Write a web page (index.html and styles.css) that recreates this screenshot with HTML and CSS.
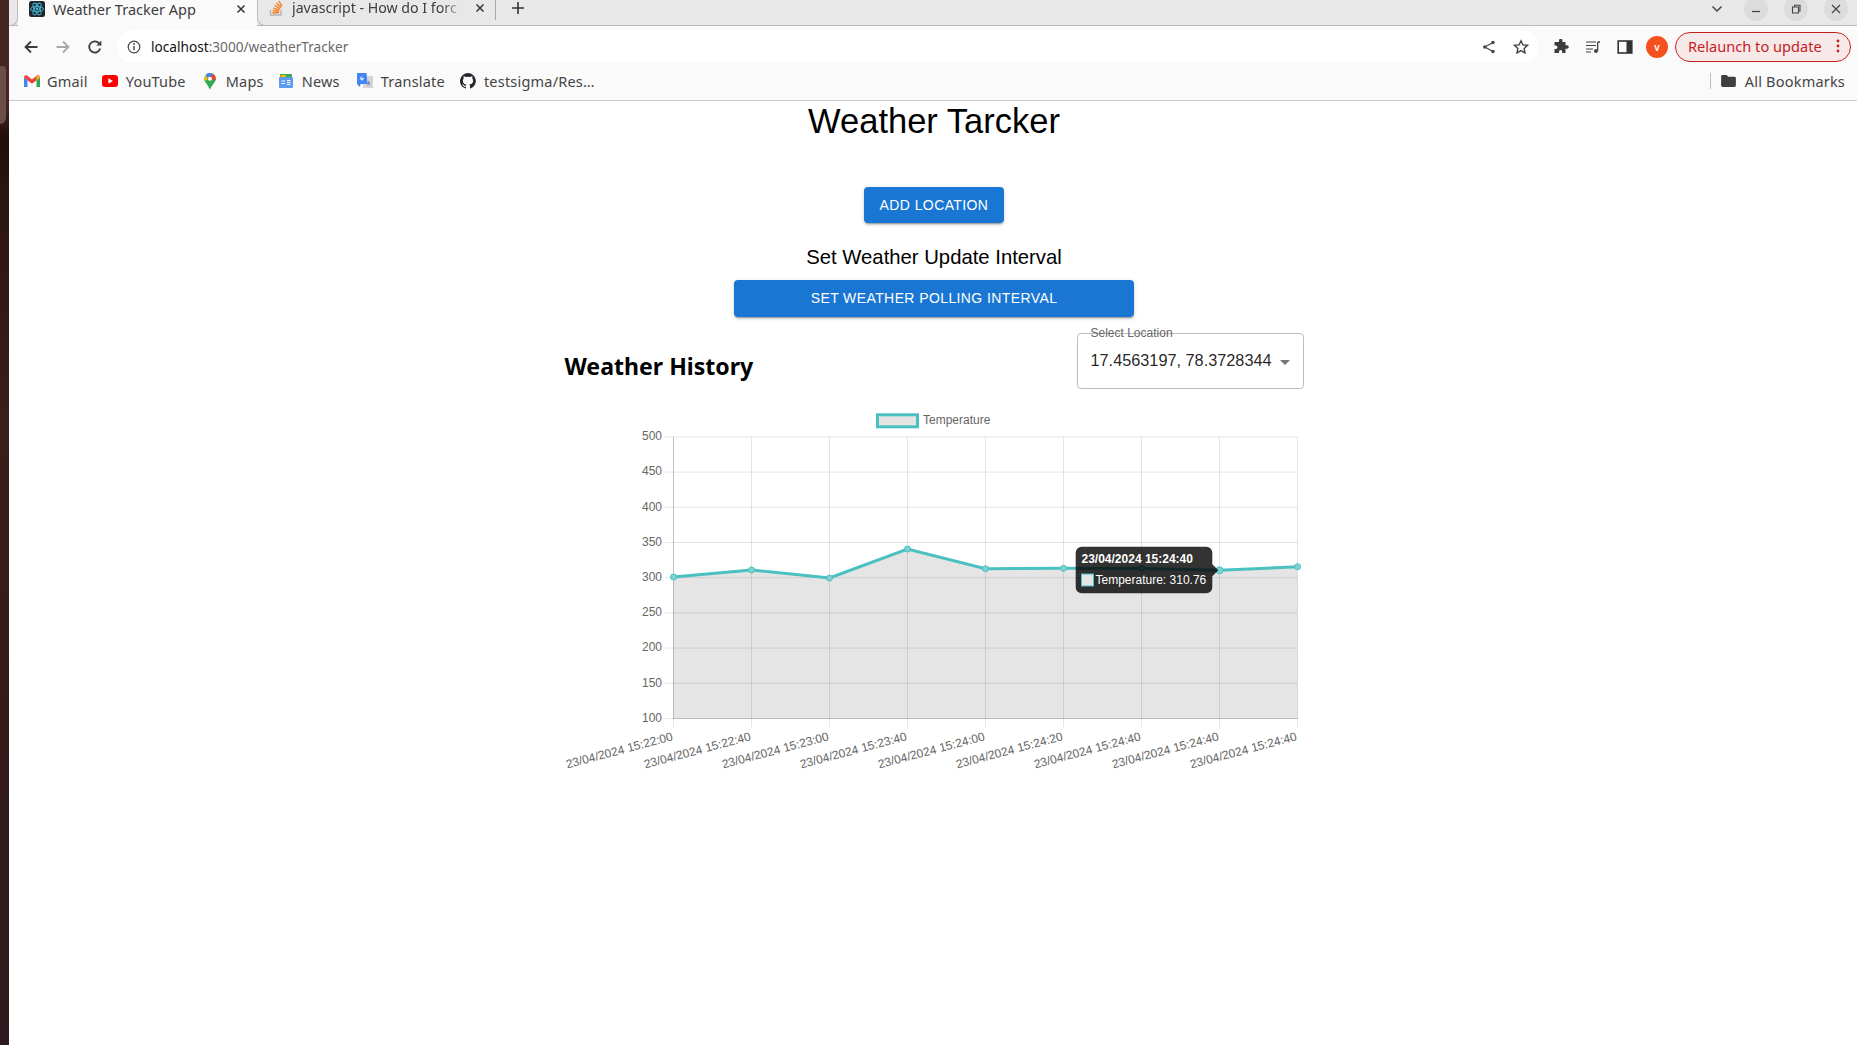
FILE: index.html
```html
<!DOCTYPE html>
<html lang="en">
<head>
<meta charset="utf-8">
<title>Weather Tracker App</title>
<link rel="stylesheet" href="styles.css">
</head>
<body>
<div class="desktop"><div class="dock-item"></div></div>
<div class="window">
  <div class="tabstrip">
    <div class="tab-spacer"></div>
    <div class="tab tab-active">
      <svg class="favicon" viewBox="0 0 16 16"><rect width="16" height="16" rx="2.5" fill="#20262c"/><g fill="none" stroke="#3fb6d3" stroke-width="1"><ellipse cx="8" cy="8" rx="6.5" ry="2.6"/><ellipse cx="8" cy="8" rx="6.5" ry="2.6" transform="rotate(60 8 8)"/><ellipse cx="8" cy="8" rx="6.5" ry="2.6" transform="rotate(120 8 8)"/></g><circle cx="8" cy="8" r="1.4" fill="#3fb6d3"/></svg>
      <span class="tab-title">Weather Tracker App</span>
      <svg class="tab-close" viewBox="0 0 10 10"><path d="M1.5 1.5l7 7M8.5 1.5l-7 7" stroke="#333" stroke-width="1.5"/></svg>
    </div>
    <div class="tab tab-second">
      <svg class="favicon" viewBox="0 0 16 16"><path d="M2.5 10v5h10.5v-5" fill="none" stroke="#b4b4b4" stroke-width="1.4"/><path d="M4.5 12.8h6.5M4.7 10.5l6.4.7M5.3 8.1l6.2 1.8M6.6 5.4l5.6 3.2M8.5 3l4.6 4.4M10.8 1l3.3 5.3" stroke="#f58025" stroke-width="1.4" fill="none"/></svg>
      <span class="tab-title tab-title-fade">javascript - How do I forc</span>
      <svg class="tab-close" viewBox="0 0 10 10"><path d="M1.5 1.5l7 7M8.5 1.5l-7 7" stroke="#333" stroke-width="1.5"/></svg>
    </div>
    <svg class="newtab" viewBox="0 0 14 14"><path d="M7 1v12M1 7h12" stroke="#333" stroke-width="1.6"/></svg>
    <div class="strip-fill"></div>
    <svg class="tab-list" viewBox="0 0 12 8"><path d="M1.5 1.5L6 6l4.5-4.5" fill="none" stroke="#444" stroke-width="1.5"/></svg>
    <div class="winbtn"><svg viewBox="0 0 12 12"><path d="M2 8.5h8" stroke="#444" stroke-width="1.2"/></svg></div>
    <div class="winbtn"><svg viewBox="0 0 12 12"><path d="M2.5 4h6v6h-6zM4.5 4V2.2h5.5V8H8.5" fill="none" stroke="#444" stroke-width="1.1"/></svg></div>
    <div class="winbtn"><svg viewBox="0 0 12 12"><path d="M2 2l8 8M10 2l-8 8" stroke="#444" stroke-width="1.2"/></svg></div>
  </div>

  <div class="toolbar">
    <svg class="nav-icon nav-back" viewBox="0 0 16 16"><path d="M14.5 8H2.5M8 2.5L2.5 8 8 13.5" fill="none" stroke="#3c3c3c" stroke-width="1.8"/></svg>
    <svg class="nav-icon nav-forward" viewBox="0 0 16 16"><path d="M1.5 8h12M8 2.5L13.5 8 8 13.5" fill="none" stroke="#a8a8a8" stroke-width="1.8"/></svg>
    <svg class="nav-icon nav-reload" viewBox="0 0 16 16"><path d="M13.2 9.5A5.6 5.6 0 1 1 12 4.2" fill="none" stroke="#3c3c3c" stroke-width="1.8"/><path d="M14.3 1.5v5h-5z" fill="#3c3c3c"/></svg>
    <div class="omnibox">
      <svg class="info" viewBox="0 0 14 14"><circle cx="7" cy="7" r="5.8" fill="none" stroke="#444" stroke-width="1.2"/><path d="M7 6v4.2" stroke="#444" stroke-width="1.4"/><circle cx="7" cy="4" r=".9" fill="#444"/></svg>
      <span class="url"><span class="url-host">localhost</span>:3000/weatherTracker</span>
      <span class="omni-fill"></span>
      <svg class="omni-icon" viewBox="0 0 14 14"><circle cx="11" cy="2.5" r="1.7" fill="#444"/><circle cx="11" cy="11.5" r="1.7" fill="#444"/><circle cx="2.8" cy="7" r="1.7" fill="#444"/><path d="M11 2.5L2.8 7 11 11.5" fill="none" stroke="#444" stroke-width="1.2"/></svg>
      <svg class="omni-icon omni-star" viewBox="0 0 16 16"><path d="M8 1.8l1.9 4.1 4.5.5-3.3 3 .9 4.4L8 11.6l-4 2.2.9-4.4-3.3-3 4.5-.5z" fill="none" stroke="#444" stroke-width="1.4"/></svg>
    </div>
    <svg class="tool-icon tool-puzzle" viewBox="0 0 16 16"><path d="M6 1.5a1.7 1.7 0 0 1 3.4 0V3h3.1v3.2H14a1.8 1.8 0 0 1 0 3.6h-1.5V14H9.2v-1.3a1.6 1.6 0 0 0-3.2 0V14H1.5v-4h1.2a1.8 1.8 0 0 0 0-3.6H1.5V3H6z" fill="#3c3c3c"/></svg>
    <svg class="tool-icon" viewBox="0 0 16 16"><path d="M1 3h10M1 6.5h10M1 10h7M1 13h5" stroke="#444" stroke-width="1.2" fill="none"/><path d="M12.7 3h2.3M12.7 3v8.6" stroke="#444" stroke-width="1.3"/><circle cx="11" cy="12" r="2" fill="#444"/></svg>
    <svg class="tool-icon" viewBox="0 0 16 16"><rect x="1.2" y="2" width="13.6" height="12" fill="none" stroke="#333" stroke-width="1.6"/><rect x="9.5" y="2" width="5.3" height="12" fill="#333"/></svg>
    <div class="avatar">v</div>
    <div class="relaunch"><span>Relaunch to update</span><svg class="dots" viewBox="0 0 4 14"><circle cx="2" cy="2" r="1.4"/><circle cx="2" cy="7" r="1.4"/><circle cx="2" cy="12" r="1.4"/></svg></div>
  </div>

  <div class="bookmarks">
    <div class="bm bm-gmail"><svg viewBox="0 0 16 12"><path d="M0 2.2V12h3.5V5.3z" fill="#4285f4"/><path d="M16 2.2V12h-3.5V5.3z" fill="#34a853"/><path d="M0 2.2C0 .4 1.8-.4 3 .6l5 3.9 5-3.9c1.2-1 3-.2 3 1.6l-3.5 3.1L8 8.7 3.5 5.3z" fill="#ea4335"/><path d="M12.5 1.1V5.3L16 2.5V1.5z" fill="#fbbc04"/></svg><span>Gmail</span></div>
    <div class="bm bm-yt"><svg viewBox="0 0 16 12"><rect width="16" height="12" rx="3" fill="#f00"/><path d="M6.4 3.3v5.4L11 6z" fill="#fff"/></svg><span>YouTube</span></div>
    <div class="bm bm-maps"><svg viewBox="0 0 12 17"><path d="M6 0a5.8 5.8 0 0 1 5.8 5.8c0 3.6-3.8 5.6-5.8 11C4 11.400.2 9.400.2 5.800A5.800 5.800 0 0 1 6 0z" fill="#34a853"/><path d="M1.700 2C2.800.700 4.300 0 6 0c1 0 2 .3 2.800.8L4 6z" fill="#4285f4"/><path d="M8.800.8A5.800 5.800 0 0 1 11.800 5.800c0 .5-.1 1-.3 1.500L4 6z" fill="#ea4335" opacity=".95"/><path d="M1.700 2L.2 5.800c0 .9.2 1.500.6 2.300L4 6z" fill="#fbbc04"/><circle cx="6" cy="5.800" r="2" fill="#fff"/></svg><span>Maps</span></div>
    <div class="bm bm-news"><svg viewBox="0 0 14 14"><rect x="1" y="0" width="12" height="6" rx="1" fill="#34a853"/><path d="M2 1h5l-1 4H1z" fill="#fbbc04"/><rect x="0" y="3" width="14" height="11" rx="1" fill="#5b9bf0"/><path d="M2.500 7h3.500M2.500 9.500h3.500M8 6.500h3.500M8 8.500h3.500M8 10.500h3.500" stroke="#fff" stroke-width="1.100"/></svg><span>News</span></div>
    <div class="bm bm-translate"><svg viewBox="0 0 16 16"><rect x="6" y="3" width="10" height="12" fill="#d5d5d5"/><path d="M0 0h9.500l1 11H3.500L3 14 0 11z" fill="#4285f4"/><path d="M7 5.300H4.800v1h1.300A1.500 1.500 0 1 1 5 3.900" fill="none" stroke="#fff" stroke-width=".9"/><path d="M11.500 7l1 2.500 1-.2-.8 1.500.8 2-1.800-1.300-1.700 1.300.7-2-1-1.500h1.300z" fill="#6f8fb8"/></svg><span>Translate</span></div>
    <div class="bm bm-github"><svg viewBox="0 0 16 16"><path d="M8 0a8 8 0 0 0-2.500 15.600c.4.100.5-.2.500-.4v-1.400c-2.200.5-2.700-1-2.700-1-.4-.9-.9-1.200-.9-1.200-.7-.5.100-.5.100-.5.800.1 1.200.8 1.200.8.700 1.200 1.900.9 2.300.7.100-.5.300-.9.500-1.100-1.800-.2-3.600-.9-3.600-4 0-.9.300-1.600.8-2.100-.1-.2-.4-1 .1-2.100 0 0 .7-.2 2.200.8a7.600 7.600 0 0 1 4 0c1.500-1 2.200-.8 2.200-.8.400 1.100.2 1.900.1 2.100.5.600.8 1.300.8 2.100 0 3.100-1.900 3.700-3.700 3.900.3.300.6.800.6 1.500v2.200c0 .2.100.5.600.4A8 8 0 0 0 8 0z" fill="#24292e"/></svg><span>testsigma/Res…</span></div>
    <div class="strip-fill"></div>
    <div class="bm-sep"></div>
    <div class="bm bm-all"><svg viewBox="0 0 16 13"><path d="M0 1.500C0 .7.700 0 1.500 0H6l1.600 1.800h6.900c.8 0 1.500.7 1.500 1.500v8.200c0 .8-.7 1.500-1.500 1.500h-13C.7 13 0 12.300 0 11.500z" fill="#3f3f3f"/></svg><span>All Bookmarks</span></div>
  </div>

  <main class="page">
    <h1 class="title">Weather Tarcker</h1>
    <button class="btn btn-add">Add Location</button>
    <h2 class="subtitle">Set Weather Update Interval</h2>
    <button class="btn btn-interval">Set Weather Polling Interval</button>

    <section class="history">
      <div class="history-head">
        <h3 class="history-title">Weather History</h3>
        <div class="select">
          <span class="select-label">Select Location</span>
          <span class="select-value">17.4563197, 78.3728344</span>
          <span class="select-caret"></span>
        </div>
      </div>

      <svg class="chart" viewBox="564 400 739 390" width="739" height="390">
        <rect x="877.500" y="414.800" width="40" height="12" class="legend-box"/>
        <text x="923" y="423.700" class="axis-text">Temperature</text>

        <g class="grid">
          <path d="M665 436.900H1297.500M665 472.100H1297.500M665 507.300H1297.500M665 542.500H1297.500M665 577.700H1297.500M665 612.900H1297.500M665 648.100H1297.500M665 683.300H1297.500M665 718.500H1297.500"/>
          <path d="M673.500 436.900V727M751.500 436.900V727M829.500 436.900V727M907.500 436.900V727M985.500 436.900V727M1063.500 436.900V727M1141.500 436.900V727M1219.500 436.900V727M1297.500 436.900V727"/>
        </g>
        <path class="axis-line" d="M673.500 436.900V718.500H1297.500"/>

        <g class="axis-text y-labels">
          <text x="662" y="440">500</text>
          <text x="662" y="475">450</text>
          <text x="662" y="510.500">400</text>
          <text x="662" y="545.500">350</text>
          <text x="662" y="580.500">300</text>
          <text x="662" y="616">250</text>
          <text x="662" y="651">200</text>
          <text x="662" y="686.500">150</text>
          <text x="662" y="721.500">100</text>
        </g>

        <g class="axis-text x-labels">
          <text transform="translate(673.500 740) rotate(-15)">23/04/2024 15:22:00</text>
          <text transform="translate(751.500 740) rotate(-15)">23/04/2024 15:22:40</text>
          <text transform="translate(829.500 740) rotate(-15)">23/04/2024 15:23:00</text>
          <text transform="translate(907.500 740) rotate(-15)">23/04/2024 15:23:40</text>
          <text transform="translate(985.500 740) rotate(-15)">23/04/2024 15:24:00</text>
          <text transform="translate(1063.500 740) rotate(-15)">23/04/2024 15:24:20</text>
          <text transform="translate(1141.500 740) rotate(-15)">23/04/2024 15:24:40</text>
          <text transform="translate(1219.500 740) rotate(-15)">23/04/2024 15:24:40</text>
          <text transform="translate(1297.500 740) rotate(-15)">23/04/2024 15:24:40</text>
        </g>

        <path class="area" d="M673.500 577L751.500 570L829.500 578L907.500 549L985.500 568.700L1063.500 568.300L1141.500 568.500L1219.500 570.300L1297.500 566.700V718.500H673.500Z"/>
        <path class="line" d="M673.500 577L751.500 570L829.500 578L907.500 549L985.500 568.700L1063.500 568.300L1141.500 568.500L1219.500 570.300L1297.500 566.700"/>
        <g class="points">
          <circle cx="673.500" cy="577" r="3"/><circle cx="751.500" cy="570" r="3"/><circle cx="829.500" cy="578" r="3"/><circle cx="907.500" cy="549" r="3"/><circle cx="985.500" cy="568.700" r="3"/><circle cx="1063.500" cy="568.300" r="3"/><circle cx="1141.500" cy="568.500" r="3"/><circle cx="1219.500" cy="570.300" r="3.500"/><circle cx="1297.500" cy="566.700" r="3"/>
        </g>

        <path class="tooltip-bg" d="M1081.700 546.700H1206.300a6 6 0 0 1 6 6V564.300L1218.300 570.300L1212.300 576.300V587.300a6 6 0 0 1-6 6H1081.700a6 6 0 0 1-6-6V552.700a6 6 0 0 1 6-6Z"/>
        <text x="1081.500" y="562.500" class="tooltip-title">23/04/2024 15:24:40</text>
        <rect x="1081.500" y="574" width="12" height="12" class="tooltip-swatch"/>
        <text x="1095.500" y="584" class="tooltip-body">Temperature: 310.76</text>
      </svg>
    </section>
  </main>
</div>
</body>
</html>
```
FILE: styles.css
```css
* { box-sizing: border-box; }
html, body { margin: 0; height: 100%; }
body {
  display: flex;
  width: 1857px;
  height: 1045px;
  overflow: hidden;
  background: #fff;
  font-family: "Liberation Sans", Arial, sans-serif;
}

/* desktop sliver on the left */
.desktop {
  position: relative;
  flex: 0 0 9px;
  background: linear-gradient(#44251f 0, #44251f 105px, #200c09 140px, #2a1512 190px, #3c1e1a 420px, #331b1a 750px, #2e1a1e 1045px);
}
.dock-item {
  position: absolute;
  left: 0;
  top: 66px;
  width: 6px;
  height: 58px;
  background: #6b4e49;
  border-radius: 0 6px 10px 0;
}

.window { flex: 1; min-width: 0; display: flex; flex-direction: column; }
.strip-fill { flex: 1; }

/* tab strip */
.tabstrip {
  display: flex;
  align-items: flex-start;
  height: 26px;
  background: #e8e8e8;
  border-bottom: 1px solid #b9b9b9;
  font-family: "Noto Sans", sans-serif;
  font-size: 14px;
  color: #3c3c3c;
}
.tab-spacer {
  flex: 0 0 9px;
  height: 26px;
  border-right: 1px solid #bcbcbc;
  border-bottom: 1px solid #bcbcbc;
  border-radius: 0 0 8px 0;
}
.tab {
  display: flex;
  align-items: center;
  height: 26px;
  padding-bottom: 9px;
}
.tab-active {
  flex: 0 0 239px;
  padding-left: 11px;
  background: #fafafa;
}
.tab-second {
  flex: 0 0 239px;
  padding-left: 10px;
  border-left: 1px solid #bcbcbc;
  border-bottom: 1px solid #b9b9b9;
  border-right: none;
  border-radius: 0 0 0 8px;
  position: relative;
}
.tab-second::after {
  content: "";
  position: absolute;
  right: 0;
  top: 0;
  height: 20px;
  border-right: 1px solid #a8a8a8;
}
.favicon { flex: 0 0 16px; width: 16px; height: 16px; }
.tab-title { margin-left: 8px; width: 178px; white-space: nowrap; font-size: 14.550px; line-height: 18px; }
.tab-second .tab-title { width: 175px; font-size: 14.200px; }
.tab-title-fade {
  -webkit-mask-image: linear-gradient(90deg, #000 85%, transparent);
  mask-image: linear-gradient(90deg, #000 85%, transparent);
}
.tab-close { flex: 0 0 10px; width: 10px; height: 10px; margin-left: 5px; }
.tab-second .tab-close { margin-left: 8px; }
.newtab { width: 14px; height: 14px; margin: 1px 0 0 15px; }
.tab-list { width: 12px; height: 8px; margin: 5px 21px 0 0; }
.winbtn {
  width: 24px;
  height: 24px;
  margin-right: 16px;
  margin-top: -3px;
  border-radius: 50%;
  background: #dcdcdc;
  display: flex;
  align-items: center;
  justify-content: center;
}
.winbtn:last-child { margin-right: 9px; }
.winbtn svg { width: 12px; height: 12px; }

/* toolbar */
.toolbar {
  display: flex;
  align-items: center;
  height: 38px;
  padding: 4px 6px 1px 14px;
  background: #fafafa;
}
.nav-icon { flex: 0 0 16px; width: 16px; height: 16px; margin-right: 16px; }
.nav-reload { margin-right: 14px; }
.omnibox {
  flex: 0 0 1421px;
  height: 33px;
  display: flex;
  align-items: center;
  padding: 0 9px 0 10px;
  background: #fff;
  border-radius: 17px;
}
.info { width: 14px; height: 14px; margin-right: 10px; }
.url { font-family: "Noto Sans", sans-serif; font-size: 13.650px; color: #6a6a6a; white-space: nowrap; }
.url-host { color: #111; }
.omni-fill { flex: 1; }
.omni-icon { width: 14px; height: 14px; }
.omni-star { width: 16px; height: 16px; margin-left: 17px; }
.tool-icon { flex: 0 0 16px; width: 16px; height: 16px; margin-left: 16px; }
.tool-puzzle { margin-left: 15px; }
.avatar {
  flex: 0 0 22px;
  width: 22px;
  height: 22px;
  margin-left: 13px;
  border-radius: 50%;
  background: #f4511e;
  color: #fff;
  font-family: "Noto Sans", sans-serif;
  font-size: 10px;
  font-weight: 600;
  display: flex;
  align-items: center;
  justify-content: center;
}
.relaunch {
  flex: 0 0 176px;
  height: 30px;
  margin-left: 7px;
  padding: 0 0 1px 12px;
  border: 1px solid #c5221f;
  border-radius: 15px;
  background: #f8e9e9;
  color: #c5221f;
  font-family: "Noto Sans", sans-serif;
  font-size: 14.600px;
  white-space: nowrap;
  display: flex;
  align-items: center;
}
.dots { width: 4px; height: 14px; margin-left: auto; margin-right: 10px; fill: #c5221f; }

/* bookmarks */
.bookmarks {
  display: flex;
  align-items: center;
  height: 37px;
  padding: 0 12px 2px 15px;
  background: #fafafa;
  border-bottom: 1px solid #cacaca;
  font-family: "Noto Sans", sans-serif;
  font-size: 14.500px;
  letter-spacing: .2px;
  color: #444;
}
.bm { display: flex; align-items: center; white-space: nowrap; }
.bm svg { display: block; }
.bm-gmail svg { width: 16px; height: 12px; margin-right: 7px; }
.bm-yt { margin-left: 14px; }
.bm-yt svg { width: 16px; height: 12px; margin-right: 8px; }
.bm-maps { margin-left: 18px; }
.bm-maps svg { width: 12px; height: 17px; margin-right: 10px; }
.bm-news { margin-left: 15px; }
.bm-news svg { width: 14px; height: 14px; margin-right: 9px; }
.bm-translate { margin-left: 17px; }
.bm-translate svg { width: 16px; height: 16px; margin-right: 8px; }
.bm-github { margin-left: 15px; }
.bm-github svg { width: 16px; height: 16px; margin-right: 8px; }
.bm-sep { width: 1px; height: 16px; background: #bdbdbd; margin-right: 10px; }
.bm-all svg { width: 15px; height: 12px; margin-right: 9px; }

/* page */
.page {
  flex: 1;
  display: flex;
  flex-direction: column;
  align-items: center;
  padding-left: 2px;
  background: #fff;
  color: #000;
}
.title {
  margin: 0;
  height: 42px;
  font-size: 34.500px;
  line-height: 40px;
  font-weight: 400;
}
.btn {
  border: 0;
  border-radius: 4px;
  background: #1976d2;
  color: #fff;
  font-family: "Liberation Sans", Arial, sans-serif;
  font-size: 14px;
  font-weight: 400;
  letter-spacing: .4px;
  text-transform: uppercase;
  box-shadow: 0 3px 1px -2px rgba(0,0,0,.2), 0 2px 2px 0 rgba(0,0,0,.14), 0 1px 5px 0 rgba(0,0,0,.12);
}
.btn-add { width: 140px; height: 36px; margin-top: 44px; }
.subtitle {
  margin: 22px 0 11px;
  height: 24px;
  font-size: 20.300px;
  line-height: 24px;
  font-weight: 400;
}
.btn-interval { width: 400px; height: 37px; padding-bottom: 2px; }
.history { width: 739px; margin-top: 16px; }
.history-head { display: flex; justify-content: space-between; height: 55px; }
.history-title {
  margin: 15px 0 0;
  font-family: "Noto Sans", sans-serif;
  font-size: 23.100px;
  line-height: 36px;
  font-weight: 700;
}
.select {
  position: relative;
  width: 227px;
  height: 56px;
  padding: 16px 13px 0;
  border: 1px solid rgba(0,0,0,.26);
  border-radius: 4px;
}
.select-label {
  position: absolute;
  left: 13px;
  top: -8px;
  font-family: "Liberation Sans", Arial, sans-serif;
  font-size: 12px;
  line-height: 14px;
  color: #666;
}
.select-value {
  font-family: "Liberation Sans", Arial, sans-serif;
  font-size: 16.300px;
  line-height: 20px;
  display: block;
  color: rgba(0,0,0,.87);
  white-space: nowrap;
}
.select-caret {
  position: absolute;
  right: 13px;
  top: 26px;
  border: 5px solid transparent;
  border-top-color: #757575;
  border-bottom: 0;
}
.chart { display: block; margin: 12px 0 0 -1px; }

/* chart */
.axis-text { font-family: "Liberation Sans", Arial, sans-serif; font-size: 12px; fill: #666; }
.y-labels { text-anchor: end; }
.x-labels { text-anchor: end; }
.legend-box { fill: #e5e5e5; stroke: #4bc0c0; stroke-width: 3; }
.grid path { fill: none; stroke: rgba(0,0,0,.1); stroke-width: 1; }
.axis-line { fill: none; stroke: rgba(0,0,0,.15); stroke-width: 1; }
.area { fill: rgba(0,0,0,.1); }
.line { fill: none; stroke: #4bc0c0; stroke-width: 3; }
.points circle { fill: #7fd2d2; stroke: #4bc0c0; stroke-width: 1; }
.tooltip-bg { fill: rgba(0,0,0,.8); }
.tooltip-title { font-family: "Liberation Sans", Arial, sans-serif; font-size: 12px; font-weight: 700; fill: #fff; }
.tooltip-body { font-family: "Liberation Sans", Arial, sans-serif; font-size: 12px; fill: #fff; }
.tooltip-swatch { fill: #e5e5e5; stroke: #4bc0c0; stroke-width: 1; }
```
